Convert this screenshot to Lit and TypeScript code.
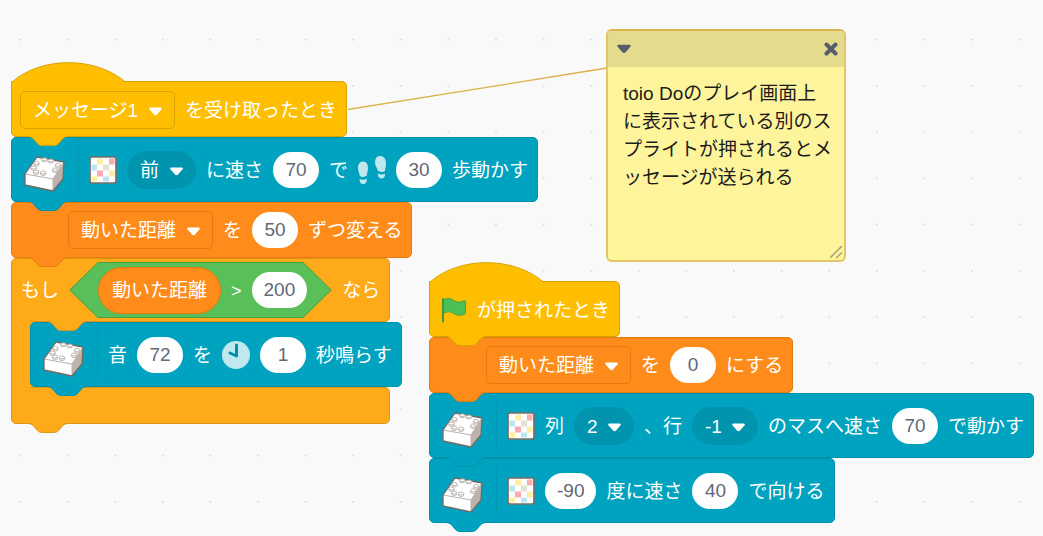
import { LitElement, html, svg, css, nothing } from "lit";
import { customElement, property } from "lit/decorators.js";

const shared = css`
  :host {
    font-family: "Liberation Sans", "Noto Sans CJK JP", sans-serif;
    font-size: 19px;
    line-height: 28px;
  }
  * {
    box-sizing: border-box;
  }
`;

const caretPath = svg`<path d="M1.500 0.500H11.500Q13.600 0.700 12.400 2.500L8 7.600Q6.500 9 5 7.600L0.600 2.500Q-0.600 0.700 1.500 0.500Z" fill="currentColor" />`;

@customElement("block-menu")
class BlockMenu extends LitElement {
  @property() value = "";
  @property() label = "";
  @property({ type: Boolean, reflect: true }) round = false;

  static styles = [
    shared,
    css`
      :host {
        display: block;
        color: #fff;
      }
      .menu {
        position: relative;
        display: block;
      }
      .select {
        display: block;
        appearance: none;
        font: inherit;
        color: inherit;
        background: transparent;
        height: 38px;
        margin: 0;
        padding: 2px 35px 0 12px;
        border: 1px solid var(--edge);
        border-radius: 5px;
        outline: none;
        cursor: pointer;
      }
      :host([round]) .select {
        background: #0094ae;
        border-color: #0094ae;
        border-radius: 19px;
      }
      .caret {
        position: absolute;
        right: 13px;
        top: 16px;
        width: 13px;
        height: 9px;
        pointer-events: none;
      }
    `,
  ];

  render() {
    return html`<div class="menu">
      <select class="select" aria-label=${this.label}>
        <option>${this.value}</option>
      </select>
      <svg class="caret" viewBox="0 0 13 9" aria-hidden="true">${caretPath}</svg>
    </div>`;
  }
}

@customElement("block-number")
class BlockNumber extends LitElement {
  @property() value = "";
  @property() label = "";

  static styles = [
    shared,
    css`
      :host {
        display: block;
      }
      .number {
        display: block;
        field-sizing: content;
        min-width: 46px;
        height: 36px;
        margin: 0;
        padding: 0 12px;
        border: 0;
        border-radius: 18px;
        background: #fff;
        color: #5f6878;
        font: inherit;
        text-align: center;
        outline: none;
      }
    `,
  ];

  render() {
    return html`<input class="number" type="text" inputmode="numeric" aria-label=${this.label} .value=${this.value} />`;
  }
}

@customElement("block-icon")
class BlockIcon extends LitElement {
  @property() name = "";

  static styles = css`
    :host,
    .icon {
      display: block;
      flex: none;
    }
  `;

  render() {
    switch (this.name) {
      case "cube":
        return html`<svg class="icon" width="42" height="46" viewBox="0 -9 42 46" aria-hidden="true">
          <path d="M13 1L40 6L39 23L29 35L1 29V18Z" fill="#fff" />
          <path d="M29 23L40 6L39 23L29 35Z" fill="#bdb3aa" />
          <path d="M1 18L29 23L40 6M29 23V35" fill="none" stroke="#b8b2ac" stroke-width="1" />
          <path d="M13 1L40 6L39 23L29 35L1 29V18Z" fill="none" stroke="#6f6a66" stroke-width="1.3" stroke-linejoin="round" />
          <g fill="#fff" stroke="#b5b0ab" stroke-width="0.9">
            <path d="M17.500 3.200v1a2.800 1.500 0 0 0 5.600 0v-1M24 4.500v1a2.800 1.500 0 0 0 5.600 0v-1" />
            <ellipse cx="20.300" cy="3.200" rx="2.800" ry="1.300" /><ellipse cx="26.800" cy="4.500" rx="2.800" ry="1.300" />
            <path d="M9.900 7v1.500a2.600 1.500 0 0 0 5.200 0V7M6.900 11.500V13a2.600 1.500 0 0 0 5.200 0v-1.500" />
            <ellipse cx="12.500" cy="7" rx="2.600" ry="1.500" /><ellipse cx="9.500" cy="11.500" rx="2.600" ry="1.500" />
            <path d="M31.500 9v1.500a2.600 1.500 0 0 0 5.200 0V9M28.500 13.500V15a2.600 1.500 0 0 0 5.200 0v-1.500" />
            <ellipse cx="34.100" cy="9" rx="2.600" ry="1.500" /><ellipse cx="31.100" cy="13.500" rx="2.600" ry="1.500" />
            <path d="M9.500 15.500V17a2.600 1.500 0 0 0 5.200 0v-1.500M16.500 16.500V18a2.600 1.500 0 0 0 5.200 0v-1.500" />
            <ellipse cx="12.100" cy="15.500" rx="2.600" ry="1.500" /><ellipse cx="19.100" cy="16.500" rx="2.600" ry="1.500" />
          </g>
        </svg>`;
      case "mat":
        return html`<svg class="icon" width="28" height="28" viewBox="0 0 28 28" aria-hidden="true">
          <rect x="1" y="1" width="26" height="26" rx="2" fill="#fff" stroke="#756f6a" stroke-width="1.700" />
          <path d="M8 2.500h6v6H8zM20 14.500h5.500v6H20zM2.500 20.500H8v5H2.500z" fill="#fdeea0" />
          <path d="M20 2.500h5.500v6H20zM8 14.500h6v6H8z" fill="#fbacb0" />
          <path d="M2.500 8.500H8v6H2.500zM14 20.500h6v5h-6z" fill="#bce3ee" />
          <path d="M14 8.500h6v6h-6z" fill="#e4e2d3" />
        </svg>`;
      case "steps":
        return html`<svg class="icon" width="28" height="28" viewBox="0 0 28 28" aria-hidden="true">
          <g fill="#bfe8ef">
            <path d="M5 5.500C8.500 5.500 10 8.500 10 12.500C10 15 9 16.500 8.800 19.500Q5 22 1.800 20C1.500 17 0 15.500 0 12C0 8.500 1.500 5.500 5 5.500Z" />
            <path d="M1.500 23Q5 24.500 8.700 22.800Q9 28 5.200 28Q1.500 28 1.500 23Z" />
            <path d="M22 0C26 0 28 3.500 28 7.500C28 10 27.300 12 27 15Q23.500 17 19.800 14.800C19.500 12 17 10 17 6.500C17 2.500 18.800 0 22 0Z" />
            <path d="M19.800 17.500Q23.500 19.500 27 17.600Q27.200 22.500 23.700 22.500Q20 22.500 19.800 17.500Z" />
          </g>
        </svg>`;
      case "clock":
        return html`<svg class="icon" width="28" height="28" viewBox="0 0 28 28" aria-hidden="true">
          <circle cx="14" cy="14" r="14" fill="#bfe8ef" />
          <path d="M14.500 4V15L8 12" fill="none" stroke="#008fa8" stroke-width="3" stroke-linecap="round" stroke-linejoin="round" />
        </svg>`;
      case "flag":
        return html`<svg class="icon" width="29" height="26" viewBox="-3 0 29 26" aria-hidden="true">
          <path d="M2 3C7 0.500 10 1.500 13 3.500C17 6 20 5 23 3.700Q24.500 3.400 24.500 5V15.500Q24.500 16.500 23.500 17C19 19 16 18.500 13 16.500C9 14 6 14.500 2 16.500Z" fill="#4cbf56" stroke="#45993d" stroke-width="0.900" />
          <path d="M2 2V24.500" stroke="#45993d" stroke-width="2.200" stroke-linecap="round" />
        </svg>`;
      default:
        return nothing;
    }
  }
}

const tab = () => html`<svg class="tab" width="40" height="11" viewBox="0 0 40 11" aria-hidden="true">
  <path class="tab-fill" d="M0 0V1C4 1 4.500 2 6.500 4L9 7Q11 9.500 14 9.500H26Q29 9.500 31 7L33.500 4C35.500 2 36 1 40 1V0Z" />
  <path class="tab-edge" d="M0 0.500C4 0.500 4.500 2 6.500 4L9 7Q11 9.500 14 9.500H26Q29 9.500 31 7L33.500 4C35.500 2 36 0.500 40 0.500" />
</svg>`;

const hat = html`<svg class="hat" width="118" height="23" viewBox="0 0 118 23" aria-hidden="true">
  <path class="tab-fill" d="M0.500 22.500V20.500C30 -6 85 -6 115 20.500L117 21.500V22.500Z" />
  <path class="tab-edge" d="M0.500 22.500V20.500C30 -6 85 -6 115 20.500" />
</svg>`;

const text = (value: string) => html`<span class="text">${value}</span>`;
const menu = (label: string, value: string) => html`<block-menu label=${label} value=${value}></block-menu>`;
const roundMenu = (label: string, value: string) => html`<block-menu round label=${label} value=${value}></block-menu>`;
const num = (label: string, value: string) => html`<block-number label=${label} value=${value}></block-number>`;
const icon = (name: string) => html`<block-icon name=${name}></block-icon>`;

const toio = (...parts: unknown[]) => html`<div class="block toio">
  ${icon("cube")}<span class="divider"></span>${parts}${tab()}
</div>`;

@customElement("app-root")
class AppRoot extends LitElement {
  static styles = [
    shared,
    css`
      :host {
        display: block;
      }
      .workspace {
        position: relative;
        min-height: 100vh;
        overflow: hidden;
        background: #f9f9f9;
        color: #fff;
      }
      .dots {
        position: absolute;
        inset: 0;
        width: 100%;
        height: 100%;
      }
      .link {
        position: absolute;
        left: 347px;
        top: 66px;
      }
      .script {
        position: absolute;
        display: flex;
        flex-direction: column;
        align-items: flex-start;
      }
      .script-message {
        left: 11px;
        top: 81px;
      }
      .script-flag {
        left: 429px;
        top: 281px;
      }
      .block {
        position: relative;
        display: flex;
        align-items: center;
        gap: 10px;
        width: max-content;
        height: 56px;
        padding: 0 9px 0 8px;
        white-space: nowrap;
        background: var(--fill);
        border: 1px solid var(--edge);
        border-radius: 5px;
      }
      .event {
        --fill: #ffbf00;
        --edge: #d9a300;
        padding-top: 2px;
        border-top-left-radius: 0;
      }
      .variable {
        --fill: #ff8c1a;
        --edge: #e57a10;
        padding-left: 56px;
      }
      .toio {
        --fill: #00a3bf;
        --edge: #0091aa;
        height: 65px;
        padding-left: 12px;
      }
      .control {
        --fill: #ffab19;
        --edge: #dd961c;
      }
      .text {
        display: block;
        padding-top: 2px;
      }
      .operator {
        position: relative;
        padding-top: 2px;
        font-size: 18px;
      }
      .divider {
        width: 1px;
        height: 47px;
        margin-left: 2px;
        background: #0097b0;
      }
      .tab,
      .hat {
        position: absolute;
        overflow: visible;
      }
      .tab {
        left: 16px;
        bottom: -11px;
        z-index: 2;
      }
      .tab-fill {
        fill: var(--fill);
      }
      .tab-edge {
        fill: none;
        stroke: var(--edge);
        stroke-width: 1px;
      }
      .hat {
        left: -1px;
        top: -20px;
      }
      .if {
        display: flex;
        flex-direction: column;
        align-items: stretch;
      }
      .if > .block {
        width: auto;
      }
      .arm {
        height: 64px;
        padding-left: 9px;
        border-bottom-left-radius: 0;
      }
      .arm > .tab {
        left: 35px;
      }
      .body {
        display: flex;
      }
      .spine {
        position: relative;
        z-index: 1;
        flex: none;
        width: 19px;
        margin: -2px 0;
        background: var(--fill);
        border-left: 1px solid var(--edge);
      }
      .foot {
        height: 37px;
        border-top-left-radius: 0;
      }
      .mouth {
        width: 6px;
        background: var(--fill);
      }
      .condition {
        position: relative;
        display: flex;
        align-items: center;
        gap: 10px;
        height: 56px;
        padding: 0 25px 0 29px;
      }
      .hex {
        position: absolute;
        inset: 0;
        display: flex;
      }
      .hex-mid {
        flex: 1;
        background: #59c059;
        border: solid #46a046;
        border-width: 1px 0;
      }
      .reporter {
        position: relative;
        height: 47px;
        padding: 9px 13px;
        border: 1px solid #e57a10;
        border-radius: 24px;
        background: #ff8c1a;
      }
      .condition block-number {
        position: relative;
      }
      .note {
        position: absolute;
        left: 606px;
        top: 29px;
        display: flex;
        flex-direction: column;
        width: 240px;
        height: 233px;
        overflow: hidden;
        border: 2px solid #e3c565;
        border-top-color: #d8b44c;
        border-radius: 6px;
        background: #fef49c;
      }
      .note-bar {
        display: flex;
        justify-content: space-between;
        align-items: center;
        height: 36px;
        padding: 0 6px 0 9px;
        background: #e4db8c;
      }
      .note-button {
        display: flex;
        padding: 0;
        border: 0;
        background: none;
        color: #575e6b;
        cursor: pointer;
      }
      .note-text {
        flex: 1;
        width: 100%;
        margin: 0;
        padding: 13px 10px 8px 15px;
        border: 0;
        outline: 0;
        resize: none;
        overflow: hidden;
        background: transparent;
        color: #1c1c1c;
        font: inherit;
        word-break: break-all;
      }
      .grip {
        position: absolute;
        right: 1px;
        bottom: 1px;
      }
    `,
  ];

  render() {
    return html`<main class="workspace">
      <svg class="dots" aria-hidden="true">
        <defs>
          <pattern id="dot" x="19" y="39" width="47.600" height="46.200" patternUnits="userSpaceOnUse">
            <rect width="2" height="1.500" fill="#dcdcdc" />
          </pattern>
        </defs>
        <rect width="100%" height="100%" fill="url(#dot)" />
      </svg>

      <section class="script script-message" aria-label="メッセージ1">
        <div class="block event">
          ${hat}${menu("メッセージ", "メッセージ1")}${text("を受け取ったとき")}${tab()}
        </div>
        ${toio(
          icon("mat"),
          roundMenu("方向", "前"),
          text("に速さ"),
          num("速さ", "70"),
          text("で"),
          icon("steps"),
          num("歩数", "30"),
          text("歩動かす"),
        )}
        <div class="block variable">
          ${menu("変数", "動いた距離")}${text("を")}${num("変化量", "50")}${text("ずつ変える")}${tab()}
        </div>
        <div class="if control">
          <div class="block control arm">
            ${text("もし")}
            <div class="condition">
              <div class="hex" aria-hidden="true">
                <svg width="29" height="56" viewBox="0 0 29 56">
                  <path d="M29 0.500L0.700 28L29 55.500" fill="#59c059" stroke="#46a046" />
                </svg>
                <span class="hex-mid"></span>
                <svg width="29" height="56" viewBox="0 0 29 56">
                  <path d="M0 0.500L28.300 28L0 55.500" fill="#59c059" stroke="#46a046" />
                </svg>
              </div>
              <span class="reporter">動いた距離</span>
              <span class="operator">&gt;</span>
              ${num("比較する値", "200")}
            </div>
            ${text("なら")}${tab()}
          </div>
          <div class="body">
            <div class="spine"></div>
            <div class="mouth">
              ${toio(text("音"), num("音", "72"), text("を"), icon("clock"), num("秒", "1"), text("秒鳴らす"))}
            </div>
          </div>
          <div class="block control foot">${tab()}</div>
        </div>
      </section>

      <section class="script script-flag" aria-label="旗">
        <div class="block event">${hat}${icon("flag")}${text("が押されたとき")}${tab()}</div>
        <div class="block variable">
          ${menu("変数", "動いた距離")}${text("を")}${num("値", "0")}${text("にする")}${tab()}
        </div>
        ${toio(
          icon("mat"),
          text("列"),
          roundMenu("列", "2"),
          text("、行"),
          roundMenu("行", "-1"),
          text("のマスへ速さ"),
          num("速さ", "70"),
          text("で動かす"),
        )}
        ${toio(icon("mat"), num("角度", "-90"), text("度に速さ"), num("速さ", "40"), text("で向ける"))}
      </section>

      <svg class="link" width="261" height="44" viewBox="0 0 261 44" aria-hidden="true">
        <path d="M1 43.500L260 2" stroke="#dcb044" stroke-width="1.300" />
      </svg>
      <aside class="note">
        <div class="note-bar">
          <button class="note-button" aria-label="折りたたむ">
            <svg width="14" height="10" viewBox="0 0 13 9">${caretPath}</svg>
          </button>
          <button class="note-button" aria-label="閉じる">
            <svg width="14" height="14" viewBox="0 0 14 14">
              <path d="M2.500 2.500L11.500 11.500M11.500 2.500L2.500 11.500" stroke="currentColor" stroke-width="4" stroke-linecap="round" />
            </svg>
          </button>
        </div>
        <textarea class="note-text" aria-label="コメント" .value=${"toio Doのプレイ画面上に表示されている別のスプライトが押されるとメッセージが送られる"}></textarea>
        <svg class="grip" width="14" height="14" viewBox="0 0 14 14" aria-hidden="true">
          <path d="M1 13L13 1M7 13L13 7.500" stroke="#a8a378" stroke-width="1.500" />
        </svg>
      </aside>
    </main>`;
  }
}
